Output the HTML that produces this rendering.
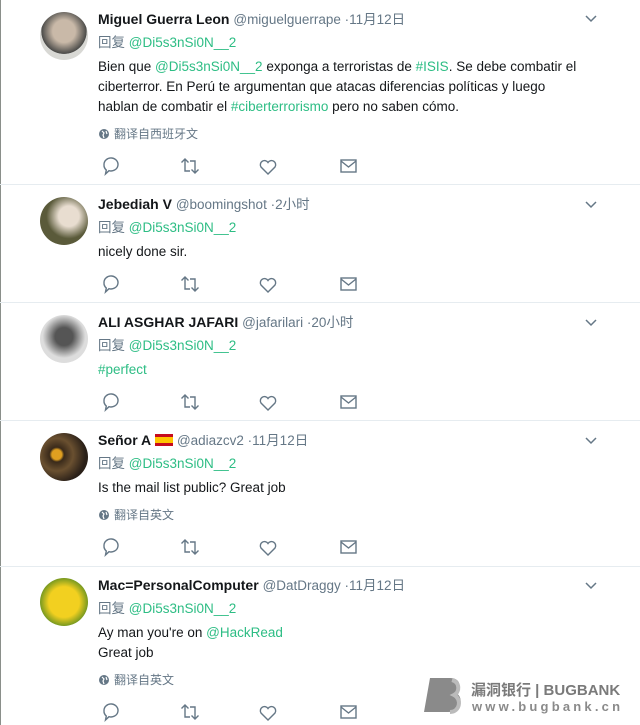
<!DOCTYPE html>
<html><head><meta charset="utf-8"><style>
body{margin:0;width:640px;height:725px;background:#fff;position:relative;overflow:hidden;font-family:"Liberation Sans","Noto Sans CJK SC",sans-serif;font-size:14px;color:#14171a}
.l{position:absolute;left:98px;line-height:20px;white-space:nowrap}
.b{font-size:13.5px}
.n{font-weight:bold}
.h,.d{color:#657786}
.g{color:#2dbd84}
.tr{font-size:12px;color:#657786}
.av{position:absolute;left:40px;width:48px;height:48px;border-radius:50%}
.sep{position:absolute;left:0;right:0;height:1px;background:#e6ecf0}
.chev{position:absolute;left:585px}
.ic{position:absolute}
.edge{position:absolute;left:0;top:0;width:1px;height:725px;background:#8a8f8a}
</style></head><body>
<div class="edge"></div>
<svg width="0" height="0" style="position:absolute"><defs>
<g id="acts" fill="none" stroke="#657786" stroke-width="1.4">
<path d="M3 8.5a7 6.5 0 1 1 5 6.2L4.5 18l0.8-4A6.5 6.5 0 0 1 3 8.5z"/>
<path d="M84 3v12h5M80.5 6.5l3.5-3.5 3.5 3.5M94 17V5h-5M97.5 13.5l-3.5 3.5-3.5-3.5"/>
<path d="M167 18l-7-7a4 4 0 0 1 7-4.5a4 4 0 0 1 7 4.5z"/>
<rect x="240" y="4" width="15" height="12"/><path d="M240 5l7.5 6 7.5-6"/>
</g>
<path id="cv" d="M1 1l5 5 5-5" fill="none" stroke="#657786" stroke-width="1.5"/>
<g id="globe"><circle cx="5" cy="5" r="5" fill="#657786"/><path d="M3 2l2 2-1 2 1 3M7 2l1 3" stroke="#fff" stroke-width="1.2" fill="none"/></g>
</defs></svg>

<!-- tweet 1 -->
<div class="av" style="top:12px;background:radial-gradient(circle at 50% 40%,#c9b9a8 0 30%,#4a4a48 60%,#d8d8d4 61%)"></div>
<div class="l" style="top:9px"><span class="n">Miguel Guerra Leon</span> <span class="h b">@miguelguerrape ·11月12日</span></div>
<svg class="chev" style="top:15px" width="14" height="9"><use href="#cv"/></svg>
<div class="l d b" style="top:33px">回复 <span class="g">@Di5s3nSi0N__2</span></div>
<div class="l b" style="top:57px">Bien que <span class="g">@Di5s3nSi0N__2</span> exponga a terroristas de <span class="g">#ISIS</span>. Se debe combatir el</div>
<div class="l b" style="top:77px">ciberterror. En Perú te argumentan que atacas diferencias políticas y luego</div>
<div class="l b" style="top:97px">hablan de combatir el <span class="g">#ciberterrorismo</span> pero no saben cómo.</div>
<svg class="ic" style="left:99px;top:129px" width="11" height="11"><use href="#globe"/></svg>
<div class="l tr" style="top:124px;left:114px">翻译自西班牙文</div>
<svg class="ic" style="left:101px;top:156px" width="260" height="22"><use href="#acts"/></svg>
<div class="sep" style="top:184px"></div>

<!-- tweet 2 -->
<div class="av" style="top:197px;background:radial-gradient(circle at 60% 40%,#e8ddd0 0 25%,#5a5a3a 55%)"></div>
<div class="l" style="top:194px"><span class="n">Jebediah V</span> <span class="h b">@boomingshot ·2小时</span></div>
<svg class="chev" style="top:201px" width="14" height="9"><use href="#cv"/></svg>
<div class="l d b" style="top:218px">回复 <span class="g">@Di5s3nSi0N__2</span></div>
<div class="l b" style="top:242px">nicely done sir.</div>
<svg class="ic" style="left:101px;top:274px" width="260" height="22"><use href="#acts"/></svg>
<div class="sep" style="top:302px"></div>

<!-- tweet 3 -->
<div class="av" style="top:315px;background:radial-gradient(circle at 50% 45%,#555 0 25%,#ddd 60%)"></div>
<div class="l" style="top:312px"><span class="n">ALI ASGHAR JAFARI</span> <span class="h b">@jafarilari ·20小时</span></div>
<svg class="chev" style="top:319px" width="14" height="9"><use href="#cv"/></svg>
<div class="l d b" style="top:336px">回复 <span class="g">@Di5s3nSi0N__2</span></div>
<div class="l g b" style="top:360px">#perfect</div>
<svg class="ic" style="left:101px;top:392px" width="260" height="22"><use href="#acts"/></svg>
<div class="sep" style="top:420px"></div>

<!-- tweet 4 -->
<div class="av" style="top:433px;background:radial-gradient(circle at 35% 45%,#e0a020 0 12%,#3a2a1a 18%,#6a5030 40%,#2a2018 70%)"></div>
<div class="l" style="top:430px"><span class="n">Señor A</span> <span style="display:inline-block;width:18px;height:12px;background:linear-gradient(#c60b1e 0 25%,#ffc400 25% 75%,#c60b1e 75%);vertical-align:-1px"></span> <span class="h b">@adiazcv2 ·11月12日</span></div>
<svg class="chev" style="top:437px" width="14" height="9"><use href="#cv"/></svg>
<div class="l d b" style="top:454px">回复 <span class="g">@Di5s3nSi0N__2</span></div>
<div class="l b" style="top:478px">Is the mail list public? Great job</div>
<svg class="ic" style="left:99px;top:510px" width="11" height="11"><use href="#globe"/></svg>
<div class="l tr" style="top:505px;left:114px">翻译自英文</div>
<svg class="ic" style="left:101px;top:537px" width="260" height="22"><use href="#acts"/></svg>
<div class="sep" style="top:566px"></div>

<!-- tweet 5 -->
<div class="av" style="top:578px;background:radial-gradient(circle at 50% 50%,#f2d020 0 45%,#7a9a20 70%)"></div>
<div class="l" style="top:575px"><span class="n">Mac=PersonalComputer</span> <span class="h b">@DatDraggy ·11月12日</span></div>
<svg class="chev" style="top:582px" width="14" height="9"><use href="#cv"/></svg>
<div class="l d b" style="top:599px">回复 <span class="g">@Di5s3nSi0N__2</span></div>
<div class="l b" style="top:623px">Ay man you're on <span class="g">@HackRead</span></div>
<div class="l b" style="top:643px">Great job</div>
<svg class="ic" style="left:99px;top:675px" width="11" height="11"><use href="#globe"/></svg>
<div class="l tr" style="top:670px;left:114px">翻译自英文</div>
<svg class="ic" style="left:101px;top:702px" width="260" height="22"><use href="#acts"/></svg>

<!-- watermark -->
<svg style="position:absolute;left:422px;top:676px" width="44" height="38"><path d="M8 2h20c10 0 12 8 6 15c8 4 6 19-8 19H2z" fill="#8a8a8a"/><path d="M30 4c8 2 8 12 2 15c8 4 6 17-4 17" fill="none" stroke="#bbb" stroke-width="4"/></svg>
<div style="position:absolute;left:471px;top:679px;font-size:15px;font-weight:bold;color:#7a7a7a;white-space:nowrap">漏洞银行 | BUGBANK</div>
<div style="position:absolute;left:472px;top:699px;font-size:13px;font-weight:bold;color:#8a8a8a;letter-spacing:3.2px;white-space:nowrap">www.bugbank.cn</div>
</body></html>
